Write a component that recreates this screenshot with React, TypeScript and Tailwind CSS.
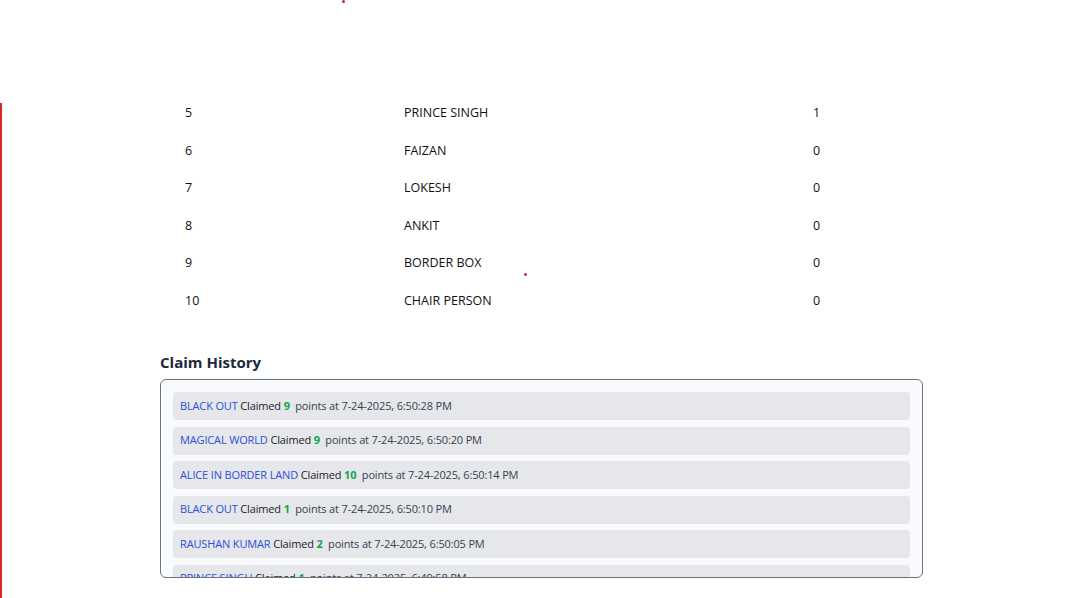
import React from "react";

const rows = [
  { rank: 5, name: "PRINCE SINGH", pts: 1 },
  { rank: 6, name: "FAIZAN", pts: 0 },
  { rank: 7, name: "LOKESH", pts: 0 },
  { rank: 8, name: "ANKIT", pts: 0 },
  { rank: 9, name: "BORDER BOX", pts: 0 },
  { rank: 10, name: "CHAIR PERSON", pts: 0 },
];

const history = [
  { name: "BLACK OUT", pts: 9, at: "7-24-2025, 6:50:28 PM" },
  { name: "MAGICAL WORLD", pts: 9, at: "7-24-2025, 6:50:20 PM" },
  { name: "ALICE IN BORDER LAND", pts: 10, at: "7-24-2025, 6:50:14 PM" },
  { name: "BLACK OUT", pts: 1, at: "7-24-2025, 6:50:10 PM" },
  { name: "RAUSHAN KUMAR", pts: 2, at: "7-24-2025, 6:50:05 PM" },
  { name: "PRINCE SINGH", pts: 1, at: "7-24-2025, 6:49:58 PM" },
  { name: "FAIZAN", pts: 3, at: "7-24-2025, 6:49:50 PM" },
];

export default function App() {
  return (
    <div
      className="relative w-[1080px] h-[598px] overflow-hidden bg-white"
      style={{ fontFamily: '"Open Sans", "Noto Sans", sans-serif' }}
    >
      <div className="absolute left-0 top-[103px] bottom-0 w-[2px] bg-[#d42a2a]" />
      <div className="absolute left-[342px] top-0 w-[3px] h-[3px] rounded-full bg-[#d42a2a]" />
      <div className="absolute left-[524px] top-[273px] w-[3px] h-[3px] rounded-full bg-[#d42a2a]" />

      <div className="ml-[160px] w-[763px] pt-[95px]">
        <div className="flex flex-col text-[12.5px] text-[#111]">
          {rows.map((r) => (
            <div
              key={r.rank}
              className="grid grid-cols-[219px_409px_1fr] h-[37.5px] items-center"
            >
              <div className="pl-[25px]">{r.rank}</div>
              <div className="pl-[25px]">{r.name}</div>
              <div className="pl-[25px]">{r.pts}</div>
            </div>
          ))}
        </div>

        <h2 className="mt-[30px] h-6 leading-6 text-[15px] font-bold text-[#1e293b]">
          Claim History
        </h2>
        <div className="mt-[5px] h-[199px] border border-[#6b7280] rounded-md bg-[#f9fafb] p-3 overflow-hidden">
          <div className="flex flex-col gap-[6.5px]">
            {history.map((h, i) => (
              <div
                key={i}
                className="h-[28px] flex items-center rounded bg-[#e5e7eb] px-[7px] text-[11px] tracking-[-0.15px] whitespace-pre"
              >
                <span className="text-[#2b50d6]">{h.name}</span>
                <span className="text-[#222]"> Claimed </span>
                <span className="text-[#16a34a] font-bold">{h.pts}</span>
                <span className="text-[#374151] font-medium">  points at {h.at}</span>
              </div>
            ))}
          </div>
        </div>
      </div>
    </div>
  );
}
